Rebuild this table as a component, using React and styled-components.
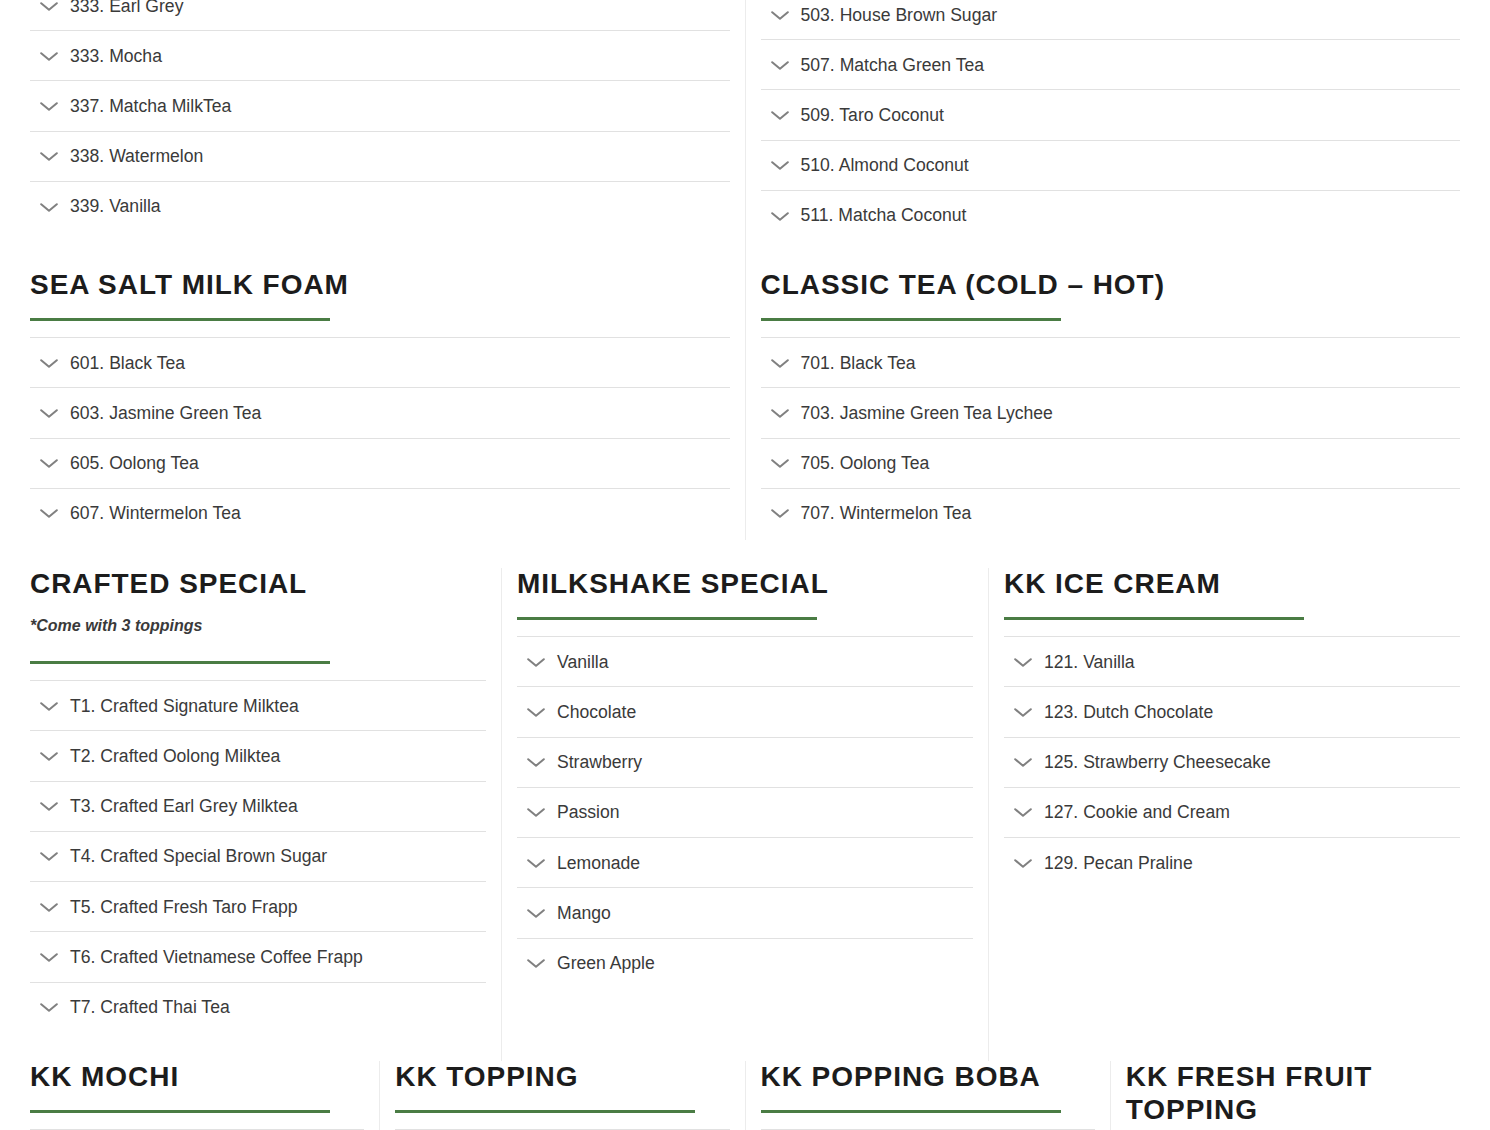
import React from "react";
import styled, { createGlobalStyle } from "styled-components";

const GlobalStyle = createGlobalStyle`
  html, body {
    margin: 0;
    padding: 0;
    overflow: hidden;
    background: #fff;
  }
  body {
    font-family: "Liberation Sans", Arial, Helvetica, sans-serif;
    color: #3a3a3a;
  }
  * {
    box-sizing: border-box;
  }
`;

const menu = {
  milkTea: ["333. Earl Grey", "333. Mocha", "337. Matcha MilkTea", "338. Watermelon", "339. Vanilla"],
  brownSugar: [
    "503. House Brown Sugar",
    "507. Matcha Green Tea",
    "509. Taro Coconut",
    "510. Almond Coconut",
    "511. Matcha Coconut",
  ],
  seaSalt: ["601. Black Tea", "603. Jasmine Green Tea", "605. Oolong Tea", "607. Wintermelon Tea"],
  classic: ["701. Black Tea", "703. Jasmine Green Tea Lychee", "705. Oolong Tea", "707. Wintermelon Tea"],
  crafted: [
    "T1. Crafted Signature Milktea",
    "T2. Crafted Oolong Milktea",
    "T3. Crafted Earl Grey Milktea",
    "T4. Crafted Special Brown Sugar",
    "T5. Crafted Fresh Taro Frapp",
    "T6. Crafted Vietnamese Coffee Frapp",
    "T7. Crafted Thai Tea",
  ],
  milkshake: ["Vanilla", "Chocolate", "Strawberry", "Passion", "Lemonade", "Mango", "Green Apple"],
  iceCream: [
    "121. Vanilla",
    "123. Dutch Chocolate",
    "125. Strawberry Cheesecake",
    "127. Cookie and Cream",
    "129. Pecan Praline",
  ],
};

// the page is shown scrolled part way down the menu
const Page = styled.div`
  margin-top: -20px;
  width: 1490px;
`;

const Row = styled.div`
  display: flex;
  margin: 0 15px ${(p) => p.$after || 0}px;
`;

const Col = styled.div`
  flex: 1 1 0;
  min-width: 0;
  padding: ${(p) => p.$top || 0}px 15px ${(p) => (p.$pad === undefined ? 29 : p.$pad)}px;
  & + & {
    border-left: 1px solid #ececec;
  }
`;

const Title = styled.h3`
  margin: -1px 0 0;
  font-size: 28px;
  line-height: 33px;
  font-weight: 700;
  letter-spacing: 0.95px;
  text-transform: uppercase;
  color: #1c1c1c;
`;

const Note = styled.p`
  margin: 14px 0 0;
  font-size: 16px;
  line-height: 24px;
  font-weight: 700;
  font-style: italic;
  color: #3a3a3a;
`;

const Bar = styled.div`
  width: 300px;
  max-width: 100%;
  height: 3px;
  margin-top: ${(p) => p.$gap || 17}px;
  background: #4a7c44;
`;

const List = styled.div`
  margin-top: ${(p) => (p.$flush ? 0 : 16)}px;
`;

const Item = styled.div`
  display: flex;
  align-items: center;
  gap: 12px;
  border-top: 1px solid #e1e1e1;
  padding: 10.56px 10px;
  font-size: 17.6px;
  line-height: 1.6;
  color: #3a3a3a;
  white-space: nowrap;
`;

const Chevron = styled.svg`
  flex: none;
  width: 18px;
  height: 9px;
  margin-top: 1px;
`;

function Arrow() {
  return (
    <Chevron viewBox="0 0 18 9">
      <polyline
        points="1.2,1.2 9,7.8 16.8,1.2"
        fill="none"
        stroke="#808080"
        strokeWidth="2"
        strokeLinecap="round"
        strokeLinejoin="round"
      />
    </Chevron>
  );
}

function Items({ items, flush }) {
  return (
    <List $flush={flush}>
      {items.map((name, i) => (
        <Item key={i}>
          <Arrow />
          <span>{name}</span>
        </Item>
      ))}
    </List>
  );
}

function Section({ title, note, items }) {
  return (
    <>
      <Title>{title}</Title>
      {note && <Note>{note}</Note>}
      <Bar $gap={note ? 23 : 17} />
      <Items items={items} />
    </>
  );
}

export default function App() {
  return (
    <>
      <GlobalStyle />
      <Page>
        <Row>
          <Col>
            <Items items={menu.milkTea} flush />
          </Col>
          <Col $top={9}>
            <Items items={menu.brownSugar} flush />
          </Col>
        </Row>

        <Row $after={28}>
          <Col $pad={2}>
            <Section title="Sea Salt Milk Foam" items={menu.seaSalt} />
          </Col>
          <Col $pad={2}>
            <Section title="Classic Tea (Cold – Hot)" items={menu.classic} />
          </Col>
        </Row>

        <Row>
          <Col>
            <Section title="Crafted Special" note="*Come with 3 toppings" items={menu.crafted} />
          </Col>
          <Col>
            <Section title="Milkshake Special" items={menu.milkshake} />
          </Col>
          <Col>
            <Section title="KK Ice Cream" items={menu.iceCream} />
          </Col>
        </Row>

        <Row>
          <Col>
            <Section title="KK Mochi" items={["Mochi"]} />
          </Col>
          <Col>
            <Section title="KK Topping" items={["Topping"]} />
          </Col>
          <Col>
            <Section title="KK Popping Boba" items={["Popping Boba"]} />
          </Col>
          <Col>
            <Section title="KK Fresh Fruit Topping" items={["Fresh Fruit"]} />
          </Col>
        </Row>
      </Page>
    </>
  );
}
